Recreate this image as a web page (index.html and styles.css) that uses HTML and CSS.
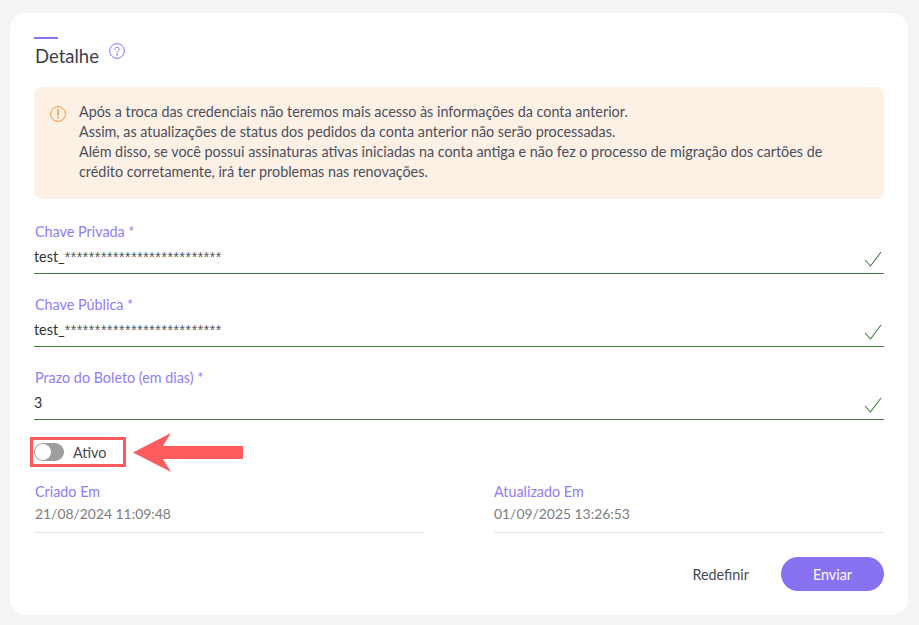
FILE: index.html
```html
<!DOCTYPE html>
<html lang="pt-BR">
<head>
  <meta charset="UTF-8">
  <title>Detalhe</title>
  <link rel="stylesheet" href="styles.css">
</head>
<body>
  <div class="card">
    <div class="title-bar"></div>
    <div class="title-row">
      <h2>Detalhe</h2>
      <svg class="help" width="16" height="16" viewBox="0 0 16 16" fill="none" stroke="#8872f2" stroke-width="1">
        <circle cx="8" cy="8" r="7.4"/>
        <path d="M5.9 6.3a2.1 2.1 0 1 1 3.2 1.8c-.7.4-1.1.8-1.1 1.6" stroke-linecap="round"/>
        <circle cx="8" cy="11.7" r=".5" fill="#8872f2"/>
      </svg>
    </div>

    <div class="alert">
      <svg class="alert-icon" width="16" height="16" viewBox="0 0 16 16" fill="none" stroke="#f0953a" stroke-width="1">
        <circle cx="8" cy="8" r="7.4"/>
        <path d="M8 4v5" stroke-width="1.6" stroke-linecap="round"/>
        <circle cx="8" cy="11.5" r=".9" fill="#f0953a" stroke="none"/>
      </svg>
      <p>Após a troca das credenciais não teremos mais acesso às informações da conta anterior.<br>
      Assim, as atualizações de status dos pedidos da conta anterior não serão processadas.<br>
      Além disso, se você possui assinaturas ativas iniciadas na conta antiga e não fez o processo de migração dos cartões de crédito corretamente, irá ter problemas nas renovações.</p>
    </div>

    <div class="field">
      <label>Chave Privada *</label>
      <div class="value">test_<span class="stars">**************************</span></div>
      <svg class="check" width="18" height="16" viewBox="0 0 18 16" fill="none" stroke="#3f7d3f" stroke-width="1.1"><path d="M1 9l5.500 6L17 1"/></svg>
    </div>
    <div class="field">
      <label>Chave Pública *</label>
      <div class="value">test_<span class="stars">**************************</span></div>
      <svg class="check" width="18" height="16" viewBox="0 0 18 16" fill="none" stroke="#3f7d3f" stroke-width="1.1"><path d="M1 9l5.500 6L17 1"/></svg>
    </div>
    <div class="field">
      <label>Prazo do Boleto (em dias) *</label>
      <div class="value">3</div>
      <svg class="check" width="18" height="16" viewBox="0 0 18 16" fill="none" stroke="#3f7d3f" stroke-width="1.1"><path d="M1 9l5.500 6L17 1"/></svg>
    </div>

    <div class="toggle-row">
      <div class="highlight"></div>
      <span class="switch"><span class="knob"></span></span>
      <span class="toggle-label">Ativo</span>
      <svg class="arrow" width="112" height="40" viewBox="0 0 112 40"><path d="M0 19.500L38 0L30 13H110V26H30L38 39Z" fill="#fd5c5f"/></svg>
    </div>

    <div class="dates">
      <div class="date">
        <label>Criado Em</label>
        <div class="date-value">21/08/2024 11:09:48</div>
      </div>
      <div class="date">
        <label>Atualizado Em</label>
        <div class="date-value">01/09/2025 13:26:53</div>
      </div>
    </div>

    <div class="actions">
      <button class="btn-link">Redefinir</button>
      <button class="btn">Enviar</button>
    </div>
  </div>
</body>
</html>
```

FILE: styles.css
```css
* { box-sizing: border-box; }
html, body { height: 100%; }
body {
  margin: 0;
  padding: 13px 11px 10px 10px;
  background: #f4f4f4;
  font-family: 'Lato', 'Noto Sans', sans-serif;
  font-size: 14.35px;
  color: #444a55;
}
.card {
  height: 602px;
  background: #fff;
  border-radius: 16px;
  padding: 24px 24px 0 24px;
}
.title-bar { width: 24px; height: 2px; background: #8872f2; }
.title-row { display: flex; align-items: flex-start; gap: 10px; height: 48px; }
h2 { margin: 5px 0 0 1px; font-size: 18.5px; line-height: 24px; font-weight: 400; color: #3b404b; }
.help { margin-top: 4px; }
.alert {
  display: flex;
  gap: 13px;
  height: 112px;
  padding: 15px 16px;
  background: #fdf0e5;
  border-radius: 8px;
}
.alert-icon { flex: none; margin-top: 4px; }
.alert p { margin: 0; line-height: 20px; width: 770px; color: #4a4f5c; }
.field {
  position: relative;
  height: 73px;
  padding-top: 23px;
}
.field label, .date label { display: block; color: #8f7df5; line-height: 20px; }
.field label { margin-left: 1px; }
.value {
  height: 32px;
  padding-top: 5px;
  line-height: 20px;
  color: #333;
  border-bottom: 1px solid #3f7d3f;
}
.stars { font-family: 'Liberation Sans', sans-serif; font-size: 14px; letter-spacing: .6px; color: #555; }
.check { position: absolute; right: 2px; top: 52px; }
.toggle-row {
  position: relative;
  display: flex;
  align-items: center;
  height: 30px;
  margin-top: 19px;
}
.highlight {
  position: absolute;
  left: -4px;
  top: 0;
  width: 96px;
  height: 30px;
  border: 3px solid #fd5c5f;
}
.switch {
  position: relative;
  width: 30px;
  height: 18px;
  border-radius: 9px;
  background: #9e9e9e;
}
.knob {
  position: absolute;
  left: 1px;
  top: 1px;
  width: 16px;
  height: 16px;
  border-radius: 50%;
  background: #fff;
}
.toggle-label { margin-left: 9px; color: #444a55; }
.arrow { position: absolute; left: 99px; top: -4px; }
.dates { display: grid; grid-template-columns: 390px 390px; gap: 70px; margin-top: 15px; }
.date { height: 51px; border-bottom: 1px solid #e5e5e5; }
.date label { margin-left: 1px; }
.date-value { margin: 2px 0 0 1px; font-size: 13.9px; line-height: 20px; color: #7d7d7d; }
.date:last-child label, .date:last-child .date-value { margin-left: 0; }
.actions { display: flex; justify-content: flex-end; align-items: center; gap: 32px; margin-top: 24px; }
.btn-link { border: none; background: none; padding: 0; font: inherit; color: #444a55; }
.btn {
  width: 103px;
  height: 34px;
  border: none;
  border-radius: 17px;
  background: #8872f2;
  color: #fff;
  font: inherit;
}
```
